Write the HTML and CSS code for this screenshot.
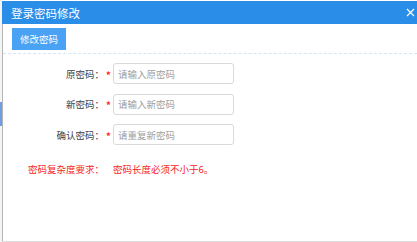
FILE: index.html
```html
<!DOCTYPE html>
<html lang="zh-CN">

<head>
    <meta charset="UTF-8">
    <meta name="viewport" content="width=device-width, initial-scale=1.0">
    <title>登录密码修改</title>
    <link rel="stylesheet" href="styles.css">
</head>

<body>
    <div class="tela">
        <div class="margem"><span class="marca"></span></div>
        <div class="janela">
            <div class="titulo">
                <span>登录密码修改</span>
                <svg class="fechar" width="9" height="9" viewBox="0 0 9 9">
                    <path d="M1 1L8 8M8 1L1 8" stroke="#fff" stroke-width="1.2" />
                </svg>
            </div>
            <div class="corpo">
                <div class="barra">
                    <button class="botao">修改密码</button>
                </div>
                <div class="formulario">
                    <label class="rotulo">原密码：</label>
                    <span class="obrigatorio">*</span>
                    <input class="campo" type="password" placeholder="请输入原密码">

                    <label class="rotulo">新密码：</label>
                    <span class="obrigatorio">*</span>
                    <input class="campo" type="password" placeholder="请输入新密码">

                    <label class="rotulo">确认密码：</label>
                    <span class="obrigatorio">*</span>
                    <input class="campo" type="password" placeholder="请重复新密码">

                    <span class="rotulo aviso">密码复杂度要求：</span>
                    <span></span>
                    <span class="aviso">密码长度必须不小于6。</span>
                </div>
            </div>
        </div>
    </div>
</body>

</html>
```

FILE: styles.css
```css
body {
    margin: 0;
    font-family: "Noto Sans CJK SC", "Liberation Sans", sans-serif;
    background-color: #fff;
}

.tela {
    display: flex;
    height: 242px;
}

.margem {
    width: 2px;
    background-color: #f4f4f4;
}

.marca {
    display: block;
    width: 2px;
    height: 24px;
    margin-top: 102px;
    background-color: #6f9de2;
}

.janela {
    flex: 1;
    display: flex;
    flex-direction: column;
    margin-top: 1px;
    border-bottom: 1px solid #dcdcdc;
}

.titulo {
    height: 23px;
    display: flex;
    align-items: center;
    justify-content: space-between;
    padding: 0 2px 0 9px;
    background-color: #2a8de8;
    color: #fff;
    font-size: 11.5px;
}

.corpo {
    flex: 1;
    border-left: 1px solid #b4b4b4;
}

.barra {
    padding: 4px 0 3px 9px;
    border-bottom: 1px dashed #d3e4f4;
}

.botao {
    display: block;
    width: 54px;
    height: 22px;
    padding: 0;
    border: none;
    background-color: #4aa2f4;
    color: #fff;
    font-family: inherit;
    font-size: 9.5px;
}

.formulario {
    display: grid;
    grid-template-columns: 101px 9px 121px;
    grid-auto-rows: 21px;
    row-gap: 9.5px;
    align-items: center;
    margin-top: 9px;
    font-size: 9.5px;
    color: #3c4048;
}

.rotulo {
    text-align: right;
}

.obrigatorio {
    color: #f22;
    text-align: center;
    font-size: 9.5px;
    font-weight: bold;
    padding-top: 2px;
}

.campo {
    box-sizing: border-box;
    width: 121px;
    height: 21px;
    padding: 0 4px;
    border: 1px solid #d9d9d9;
    border-radius: 3px;
    font-family: inherit;
    font-size: 9.5px;
}

.campo::placeholder {
    color: #a0a0a0;
}

.aviso {
    margin-top: 8px;
    color: #f42424;
    white-space: nowrap;
}
```
